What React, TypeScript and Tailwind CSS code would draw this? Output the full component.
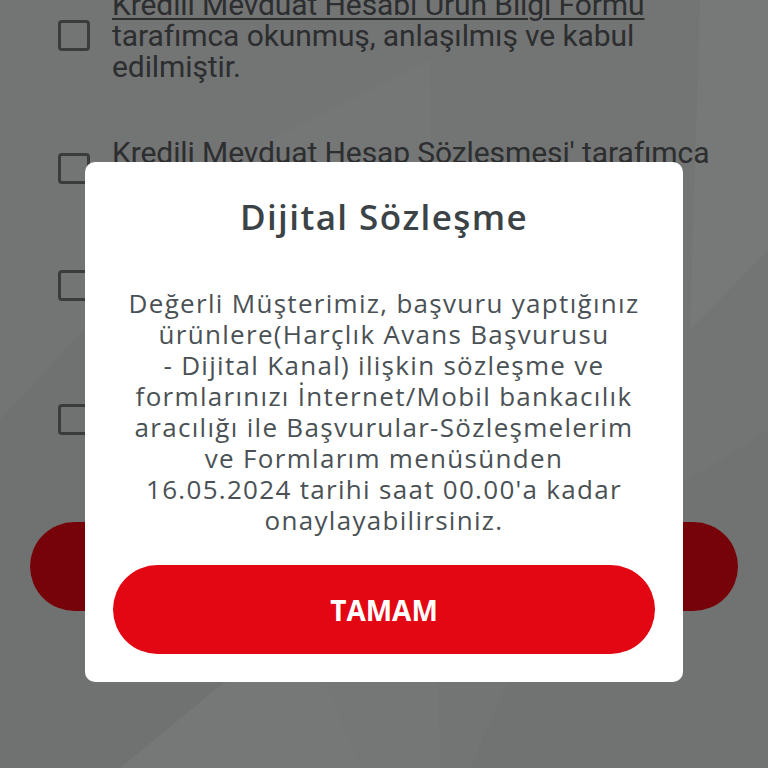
export default function App() {
  return (
    <div className="relative h-[768px] w-[768px] overflow-hidden bg-[#dcdedf] font-['Roboto',sans-serif]">
      {/* decorative background shapes */}
      <svg className="pointer-events-none absolute inset-0" width="768" height="768" viewBox="0 0 768 768">
        <polygon points="0,420 250,150 270,768 0,768" fill="#d6d8d9" />
        <polygon points="250,150 430,60 440,768 270,768" fill="#e0e2e3" />
        <polygon points="700,0 768,0 768,250 690,330" fill="#e4e6e7" />
        <polygon points="560,560 768,430 768,768 470,768" fill="#d8dadb" />
        <polygon points="120,768 300,620 360,768" fill="#e2e4e5" />
      </svg>

      <div className="relative -mt-[11px] px-[58px] text-[30px] leading-[31px] tracking-[-0.1px] text-[#55585b]">
        <div className="flex items-center gap-[22px]">
          <span className="h-[31px] w-[32px] shrink-0 rounded-[4px] border-[3px] border-[#6f7276]" />
          <p>
            <span className="underline decoration-[2px] underline-offset-[3px]">Kredili Mevduat Hesabı Ürün Bilgi Formu</span>
            <br />
            tarafımca okunmuş, anlaşılmış ve kabul
            <br />
            edilmiştir.
          </p>
        </div>
        <div className="mt-[55px] flex items-center gap-[22px]">
          <span className="h-[31px] w-[32px] shrink-0 rounded-[4px] border-[3px] border-[#6f7276]" />
          <p>
            Kredili Mevduat Hesap Sözleşmesi' tarafımca
            <br />
            okunmuş ve kabul edilmiştir.
          </p>
        </div>
        <div className="mt-[55px] flex items-center gap-[22px]">
          <span className="h-[31px] w-[32px] shrink-0 rounded-[4px] border-[3px] border-[#6f7276]" />
          <p>
            Bilgilendirme formu tarafımca
            <br />
            okunmuştur.
          </p>
        </div>
        <div className="mt-[72px] flex items-center gap-[22px]">
          <span className="h-[31px] w-[32px] shrink-0 rounded-[4px] border-[3px] border-[#6f7276]" />
          <p>
            Kişisel verilerin işlenmesine
            <br />
            onay veriyorum.
          </p>
        </div>
        <div className="-mx-[28px] mt-[72px] flex h-[89px] items-center justify-center rounded-full bg-[#e30613] text-[26px] font-bold text-white">
          DEVAM
        </div>
      </div>

      {/* overlay + dialog */}
      <div className="absolute inset-0 flex justify-center bg-black/[0.48] pt-[162px] font-['Open_Sans',sans-serif]">
        <div className="flex h-[520px] w-[598px] flex-col items-center rounded-[10px] bg-white px-[28px] pb-[28px] pt-[35px] text-center">
          <h2 className="text-[35px] font-semibold leading-[40px] tracking-[1.4px] text-[#3b4347]">Dijital Sözleşme</h2>
          <p className="mt-[51px] text-[26px] leading-[31px] tracking-[1.3px] text-[#4a5155]">
            Değerli Müşterimiz, başvuru yaptığınız
            <br />
            ürünlere(Harçlık Avans Başvurusu
            <br />
            - Dijital Kanal) ilişkin sözleşme ve
            <br />
            formlarınızı İnternet/Mobil bankacılık
            <br />
            aracılığı ile Başvurular-Sözleşmelerim
            <br />
            ve Formlarım menüsünden
            <br />
            16.05.2024 tarihi saat 00.00'a kadar
            <br />
            onaylayabilirsiniz.
          </p>
          <button className="mt-auto flex h-[89px] w-full items-center justify-center rounded-full bg-[#e30613] text-[28px] font-bold text-white">
            TAMAM
          </button>
        </div>
      </div>
    </div>
  );
}
